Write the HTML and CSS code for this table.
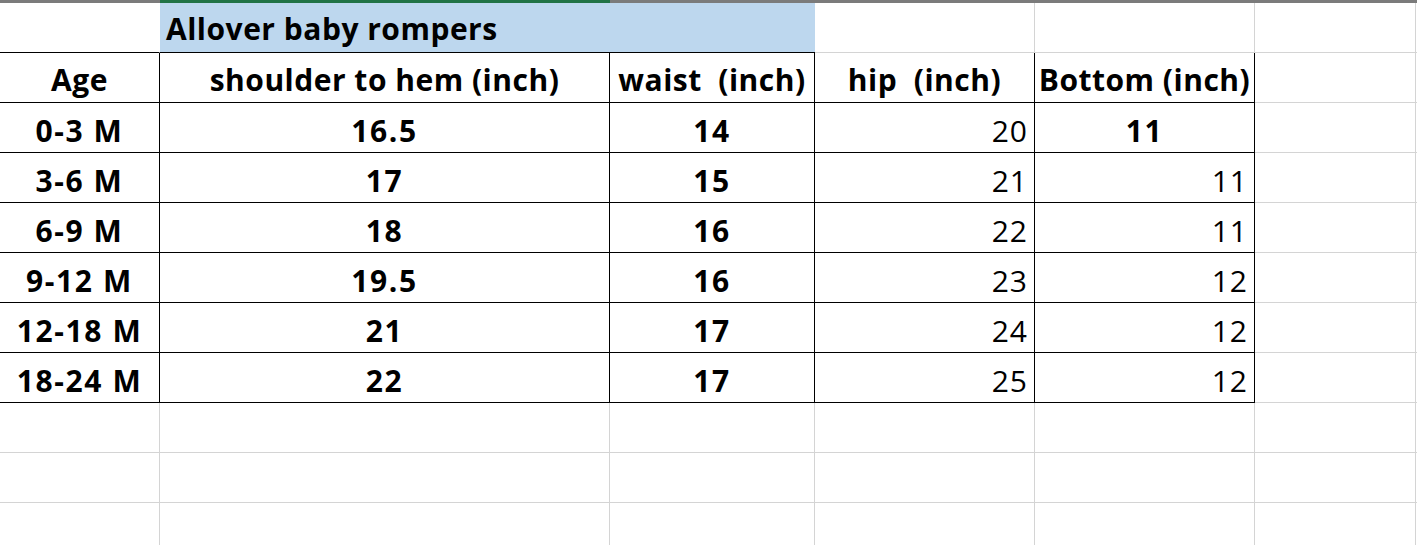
FILE: index.html
```html
<!DOCTYPE html>
<html>
<head>
<meta charset="utf-8">
<link rel="stylesheet" href="styles.css">
</head>
<body>
<div class="topbar"><div class="tb-a"></div><div class="tb-b"></div><div class="tb-rest"></div></div>
<div class="sheet">
  <!-- row 1 -->
  <div class="c r1a"></div>
  <div class="c title">Allover baby rompers</div>
  <div class="c g"></div>
  <div class="c g"></div>
  <div class="c g"></div>
  <div class="c g end"></div>

  <!-- header -->
  <div class="c t ctr b hd">Age</div>
  <div class="c t ctr b hd">shoulder to hem (inch)</div>
  <div class="c t ctr b hd pre">waist  (inch)</div>
  <div class="c t ctr b hd pre">hip  (inch)</div>
  <div class="c t ctr b hd">Bottom (inch)</div>
  <div class="c g"></div>
  <div class="c g end"></div>

  <div class="c t ctr b num">0-3 M</div>
  <div class="c t ctr b num">16.5</div>
  <div class="c t ctr b num">14</div>
  <div class="c t rt num">20</div>
  <div class="c t ctr b num">11</div>
  <div class="c g"></div>
  <div class="c g end"></div>

  <div class="c t ctr b num">3-6 M</div>
  <div class="c t ctr b num">17</div>
  <div class="c t ctr b num">15</div>
  <div class="c t rt num">21</div>
  <div class="c t rt num">11</div>
  <div class="c g"></div>
  <div class="c g end"></div>

  <div class="c t ctr b num">6-9 M</div>
  <div class="c t ctr b num">18</div>
  <div class="c t ctr b num">16</div>
  <div class="c t rt num">22</div>
  <div class="c t rt num">11</div>
  <div class="c g"></div>
  <div class="c g end"></div>

  <div class="c t ctr b num">9-12 M</div>
  <div class="c t ctr b num">19.5</div>
  <div class="c t ctr b num">16</div>
  <div class="c t rt num">23</div>
  <div class="c t rt num">12</div>
  <div class="c g"></div>
  <div class="c g end"></div>

  <div class="c t ctr b num">12-18 M</div>
  <div class="c t ctr b num">21</div>
  <div class="c t ctr b num">17</div>
  <div class="c t rt num">24</div>
  <div class="c t rt num">12</div>
  <div class="c g"></div>
  <div class="c g end"></div>

  <div class="c t ctr b num">18-24 M</div>
  <div class="c t ctr b num">22</div>
  <div class="c t ctr b num">17</div>
  <div class="c t rt num">25</div>
  <div class="c t rt num">12</div>
  <div class="c g"></div>
  <div class="c g end"></div>

  <div class="c g"></div><div class="c g"></div><div class="c g"></div><div class="c g"></div><div class="c g"></div><div class="c g"></div><div class="c g end"></div>
  <div class="c g"></div><div class="c g"></div><div class="c g"></div><div class="c g"></div><div class="c g"></div><div class="c g"></div><div class="c g end"></div>
  <div class="c g"></div><div class="c g"></div><div class="c g"></div><div class="c g"></div><div class="c g"></div><div class="c g"></div><div class="c g end"></div>
</div>
</body>
</html>
```
FILE: styles.css
```css
html, body {
  margin: 0;
  padding: 0;
  background: #ffffff;
  overflow: hidden;
}
body {
  width: 1417px;
  height: 545px;
  font-family: "Open Sans", "Liberation Sans", sans-serif;
  color: #000;
}
.topbar {
  display: flex;
  height: 3px;
}
.tb-a { width: 160px; background: #7b7b7b; }
.tb-b { width: 450px; background: #217346; }
.tb-rest { flex: 1; background: #7b7b7b; }

.sheet {
  display: grid;
  grid-template-columns: 160px 450px 205px 220px 220px 161px 1fr;
  grid-auto-rows: 50px;
}
.c {
  box-sizing: border-box;
  border-right: 1px solid #d4d4d4;
  border-bottom: 1px solid #d4d4d4;
  display: flex;
  align-items: flex-end;
  font-size: 30px;
  line-height: 30px;
  letter-spacing: 0.5px;
  padding-bottom: 6px;
  white-space: nowrap;
  overflow: visible;
}
.c.end { border-right: none; }
.r1a {
  border-right: 1px solid #fff;
  border-bottom: 1px solid #000;
}
.title {
  grid-column: span 2;
  background: #bdd7ee;
  border-right: none;
  border-bottom: 1px solid #000;
  font-weight: 700;
  padding-left: 6px;
  padding-bottom: 8px;
}
.t {
  border-right: 1px solid #000;
  border-bottom: 1px solid #000;
}
.hd { padding-bottom: 7px; }
.num { letter-spacing: 1px; }
.num.b { letter-spacing: 1.6px; }
.ctr { justify-content: center; }
.rt { justify-content: flex-end; padding-right: 6px; }
.b { font-weight: 700; }
.pre { white-space: pre; }
```
